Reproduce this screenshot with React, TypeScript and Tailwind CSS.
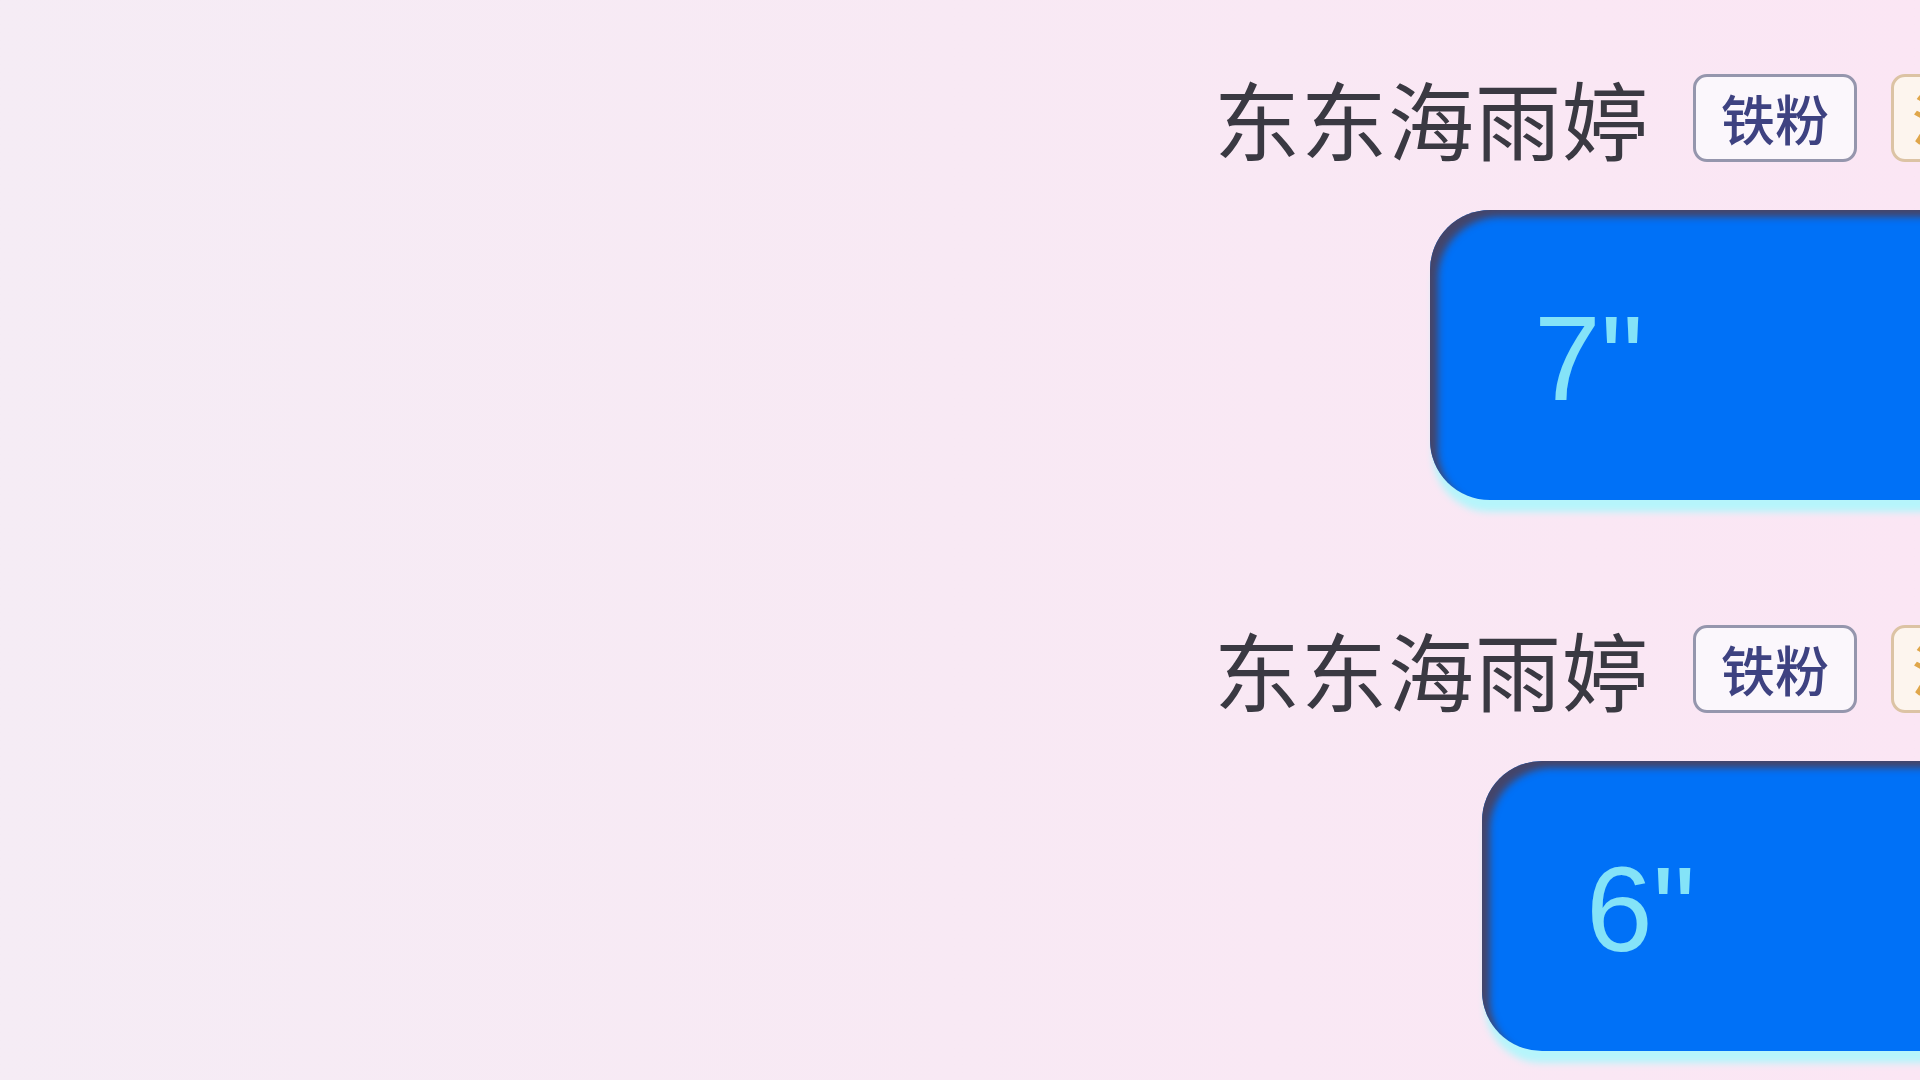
import React from 'react';

interface VoiceMsg {
  id: number;
  name: string;
  seconds: number;
  offset: string;
  bubbleOffset: string;
}

const messages: VoiceMsg[] = [
  { id: 1, name: '东东海雨婷', seconds: 7, offset: 'mt-[73px]', bubbleOffset: 'ml-[1430px]' },
  { id: 2, name: '东东海雨婷', seconds: 6, offset: 'mt-[124px]', bubbleOffset: 'ml-[1482px]' },
];

function NameRow({ name }: { name: string }) {
  return (
    <div className="flex items-center ml-[1214px] h-[90px] shrink-0">
      <span
        className="text-[86px] leading-none text-[#3a3942] whitespace-nowrap tracking-[1px]"
        style={{ fontFamily: '"Noto Sans CJK SC", "Noto Sans", sans-serif' }}
      >
        {name}
      </span>
      {/* fan badge */}
      <div className="ml-[44px] shrink-0 w-[164px] h-[88px] rounded-[14px] border-[3px] border-[#9596ad] bg-[#fbf7fc] flex items-center justify-center">
        <span
          className="text-[54px] font-medium leading-none text-[#3e4281] whitespace-nowrap"
          style={{ fontFamily: '"Noto Sans CJK SC", sans-serif' }}
        >
          铁粉
        </span>
      </div>
      {/* level badge, cut off at the edge */}
      <div className="ml-[34px] shrink-0 w-[164px] h-[88px] rounded-[14px] border-[3px] border-[#dcc3a4] bg-[#fdf5ee] flex items-center pl-[18px]">
        <span
          className="text-[54px] font-medium leading-none text-[#e0a64a] whitespace-nowrap"
          style={{ fontFamily: '"Noto Sans CJK SC", sans-serif' }}
        >
          活跃
        </span>
      </div>
    </div>
  );
}

function VoiceBubble({ seconds, offset }: { seconds: number; offset: string }) {
  return (
    <div
      className={`${offset} mt-[47px] shrink-0 w-[720px] h-[290px] rounded-[60px] bg-[#0071f7] flex items-center pl-[104px] shadow-[inset_10px_9px_7px_-2px_rgba(72,66,98,0.95),0_15px_7px_-3px_#b6f5fb]`}
    >
      <span
        className="text-[120px] leading-none text-[#84e3f8] mt-[6px]"
        style={{ fontFamily: '"Liberation Sans", Arial, sans-serif' }}
      >
        {seconds}"
      </span>
    </div>
  );
}

export default function App() {
  return (
    <div className="w-[1920px] h-[1080px] overflow-hidden bg-gradient-to-r from-[#f5ecf5] via-[#f8e9f4] to-[#fbe6f4] flex flex-col">
      {messages.map((m) => (
        <div key={m.id} className={`${m.offset} flex flex-col`}>
          <NameRow name={m.name} />
          <VoiceBubble seconds={m.seconds} offset={m.bubbleOffset} />
        </div>
      ))}
    </div>
  );
}
